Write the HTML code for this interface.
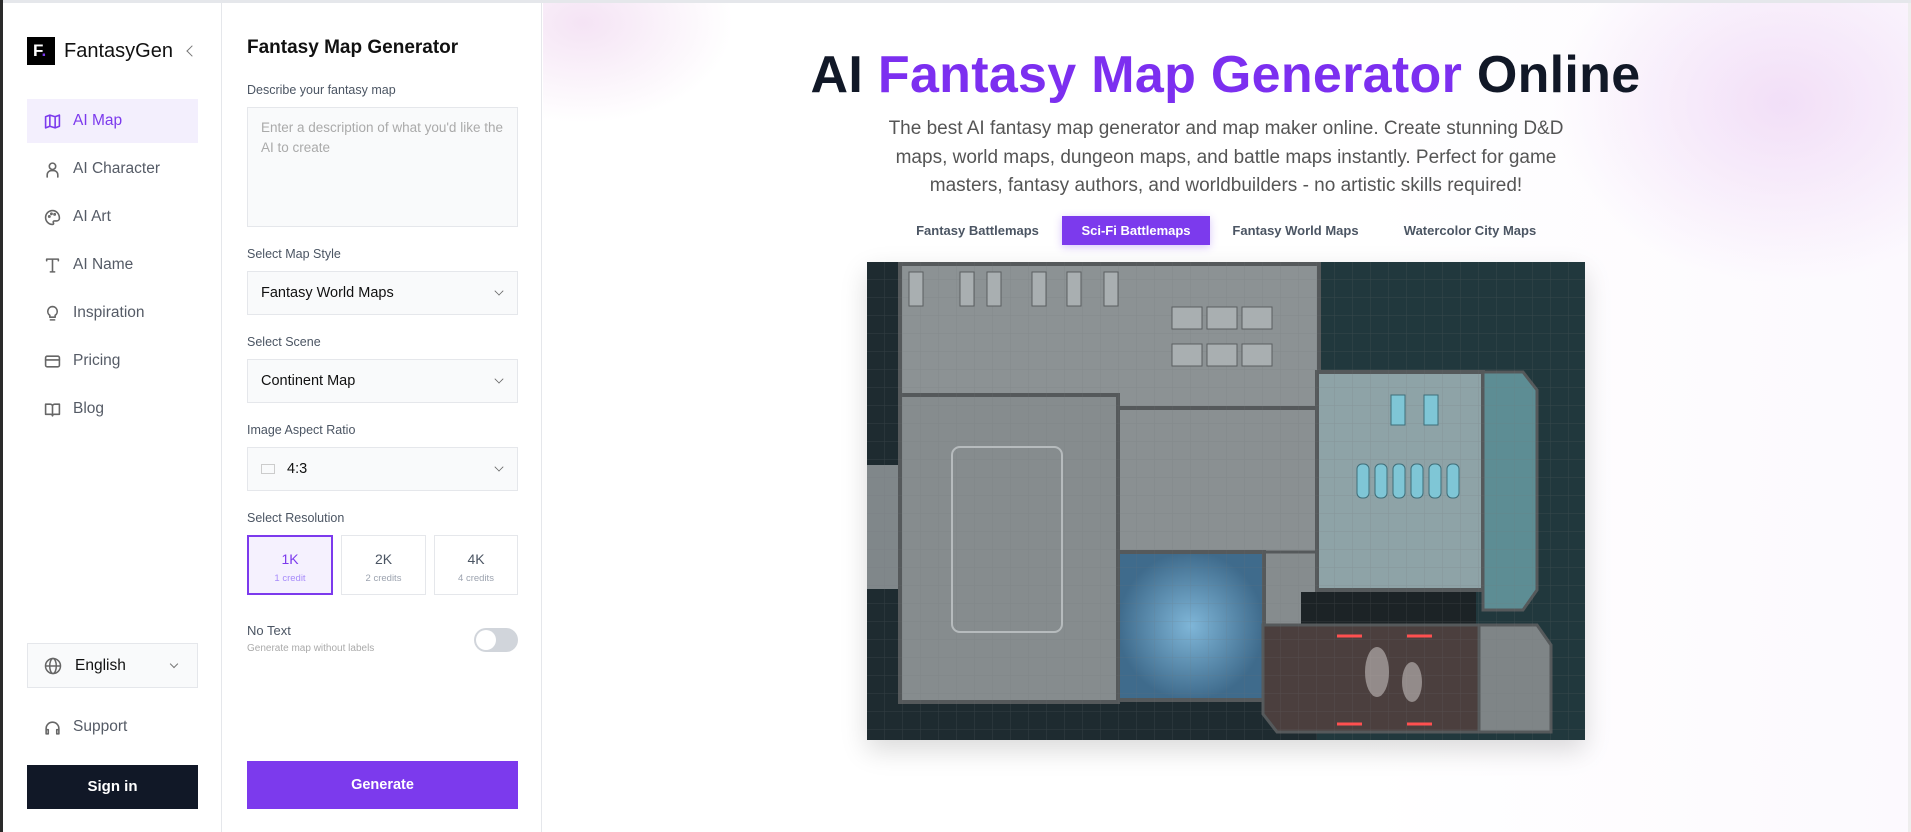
<!DOCTYPE html>
<html><head><meta charset="utf-8"><style>
*{box-sizing:border-box;margin:0;padding:0}
body{width:1911px;height:832px;overflow:hidden;background:#fff;font-family:"Liberation Sans",sans-serif;position:relative;color:#111827}
.abs{position:absolute}
#topline{left:0;top:0;width:1911px;height:3px;background:#e5e7eb;z-index:5}
#lstrip{left:0;top:0;width:3px;height:832px;background:#2a2a2a;z-index:6}
#side{left:3px;top:3px;width:219px;height:829px;border-right:1px solid #e5e7eb;background:#fff}
#panel{left:222px;top:3px;width:320px;height:829px;border-right:1px solid #e5e7eb;background:#fff}
#main{left:543px;top:3px;width:1365px;height:829px;overflow:hidden;
background:radial-gradient(ellipse 150px 100px at 40px 20px,rgba(236,205,236,.55),rgba(255,255,255,0)),
radial-gradient(ellipse 230px 180px at 1240px 100px,rgba(240,218,246,.85),rgba(255,255,255,0)),
linear-gradient(90deg,#fff 0%,#fff 60%,#fcf9fe 100%)}
#rline{left:1908px;top:3px;width:3px;height:829px;background:#eee}
.nav{position:absolute;left:27px;width:171px;height:44px;display:flex;align-items:center;padding-left:17px;font-size:15.5px;color:#555b66}
.nav svg{width:17px;height:17px;margin-right:12px;fill:none;stroke:#666;stroke-width:1.5;stroke-linecap:round;stroke-linejoin:round}
.lbl{position:absolute;left:247px;font-size:12.5px;color:#4b5563}
.sel{position:absolute;left:247px;width:271px;height:44px;border:1px solid #e5e7eb;background:#f9fafb;font-size:14.5px;color:#111;display:flex;align-items:center;padding-left:13px}
.sel .chev{position:absolute;right:14px;top:15px;width:8px;height:8px;border-right:1.3px solid #666;border-bottom:1.3px solid #666;transform:rotate(45deg) scale(.8)}
.res{position:absolute;top:535px;height:60px;border:1px solid #e5e7eb;text-align:center;font-size:14px;color:#4b5563;padding-top:15px}
.res small{display:block;font-size:9.5px;color:#9ca3af;margin-top:6px}
.tab{position:absolute;top:216px;height:29px;font-size:13px;font-weight:bold;color:#4b5563;line-height:29px;text-align:center}
</style></head><body>
<div id="topline" class="abs"></div><div id="lstrip" class="abs"></div>
<div id="side" class="abs"></div>
<div class="abs" style="left:27px;top:37px;width:28px;height:28px;background:#000;color:#fff;font-weight:bold;font-size:17px;line-height:28px;padding-left:6px">F<span style="color:#7c3aed">.</span></div>
<div class="abs" style="left:64px;top:38px;font-size:20px;color:#111;line-height:26px">FantasyGen</div>
<div class="abs" style="left:188px;top:47px;width:8px;height:8px;border-left:1.5px solid #777;border-bottom:1.5px solid #777;transform:rotate(45deg)"></div>
<div class="nav" style="top:99px;background:#f3effd;color:#7c3aed"><svg viewBox="0 0 16 16" style="stroke:#7c3aed"><path d="M1.5 3.5l4-1.5 5 1.5 4-1.5v10.5l-4 1.5-5-1.5-4 1.5z M5.5 2v10.5 M10.5 3.5v10.5"/></svg>AI Map</div>
<div class="nav" style="top:147px"><svg viewBox="0 0 16 16"><circle cx="8" cy="5" r="3"/><path d="M3 15v-2a4 4 0 0 1 4-4h2a4 4 0 0 1 4 4v2"/></svg>AI Character</div>
<div class="nav" style="top:195px"><svg viewBox="0 0 16 16"><path d="M8 1.5a6.5 6.5 0 1 0 0 13c1 0 1.3-.8.8-1.6-.5-.8 0-1.7 1-1.7H12a2.5 2.5 0 0 0 2.5-2.5C14.5 4.5 11.6 1.5 8 1.5z"/><circle cx="5" cy="7" r=".6"/><circle cx="7" cy="4.5" r=".6"/><circle cx="10" cy="5" r=".6"/></svg>AI Art</div>
<div class="nav" style="top:243px"><svg viewBox="0 0 16 16"><path d="M2.5 3.5v-1.5h11v1.5 M8 2v12 M6 14h4"/></svg>AI Name</div>
<div class="nav" style="top:291px"><svg viewBox="0 0 16 16"><path d="M8 1.5a4.5 4.5 0 0 0-2.5 8.2V11.5h5V9.7A4.5 4.5 0 0 0 8 1.5z M6 14h4"/></svg>Inspiration</div>
<div class="nav" style="top:339px"><svg viewBox="0 0 16 16"><rect x="1.5" y="3" width="13" height="10" rx="1.5"/><path d="M1.5 6.5h13"/></svg>Pricing</div>
<div class="nav" style="top:387px"><svg viewBox="0 0 16 16"><path d="M1.5 3h4.5a2 2 0 0 1 2 2v9a1.5 1.5 0 0 0-1.5-1.5H1.5z M14.5 3H10a2 2 0 0 0-2 2v9a1.5 1.5 0 0 1 1.5-1.5h5z"/></svg>Blog</div>
<div class="abs" style="left:27px;top:643px;width:171px;height:45px;border:1px solid #e5e7eb;background:#f9fafb;display:flex;align-items:center;padding-left:16px;font-size:15.5px;color:#111">
<svg viewBox="0 0 18 18" width="18" height="18" style="fill:none;stroke:#666;stroke-width:1.5;margin-right:13px"><circle cx="9" cy="9" r="7.5"/><ellipse cx="9" cy="9" rx="3.3" ry="7.5"/><path d="M1.5 9h15"/></svg>English
<div style="position:absolute;right:20px;top:17px;width:6px;height:6px;border-right:1.2px solid #777;border-bottom:1.2px solid #777;transform:rotate(45deg)"></div></div>
<div class="nav" style="top:705px"><svg viewBox="0 0 16 16"><path d="M2 13V9a6 6 0 0 1 12 0v4 M2 10h2v4H2z M12 10h2v4h-2z"/></svg>Support</div>
<div class="abs" style="left:27px;top:765px;width:171px;height:44px;background:#111827;color:#fff;font-size:15px;font-weight:bold;text-align:center;line-height:44px">Sign in</div>

<div id="panel" class="abs"></div>
<div class="abs" style="left:247px;top:37px;font-size:19px;font-weight:bold;color:#111">Fantasy Map Generator</div>
<div class="lbl" style="top:83px">Describe your fantasy map</div>
<div class="abs" style="left:247px;top:107px;width:271px;height:120px;border:1px solid #e5e7eb;background:#f9fafb;padding:10px 13px;font-size:13.5px;line-height:20px;color:#aaa">Enter a description of what you'd like the AI to create</div>
<div class="lbl" style="top:247px">Select Map Style</div>
<div class="sel" style="top:271px">Fantasy World Maps<div class="chev"></div></div>
<div class="lbl" style="top:335px">Select Scene</div>
<div class="sel" style="top:359px">Continent Map<div class="chev"></div></div>
<div class="lbl" style="top:423px">Image Aspect Ratio</div>
<div class="sel" style="top:447px"><span style="display:inline-block;width:14px;height:10px;border:1px solid #ccc;margin-right:12px"></span>4:3<div class="chev"></div></div>
<div class="lbl" style="top:511px">Select Resolution</div>
<div class="res" style="left:247px;width:86px;border:2px solid #7c3aed;background:#f5f1fe;color:#7c3aed;padding-top:14px">1K<small style="color:#a78bfa">1 credit</small></div>
<div class="res" style="left:341px;width:85px">2K<small>2 credits</small></div>
<div class="res" style="left:434px;width:84px">4K<small>4 credits</small></div>
<div class="abs" style="left:247px;top:623px;font-size:13px;color:#4b5563">No Text</div>
<div class="abs" style="left:247px;top:643px;font-size:10px;color:#aaa">Generate map without labels</div>
<div class="abs" style="left:474px;top:628px;width:44px;height:24px;border-radius:12px;background:#d1d5db"><div style="position:absolute;left:2px;top:2px;width:20px;height:20px;border-radius:50%;background:#fff"></div></div>
<div class="abs" style="left:247px;top:761px;width:271px;height:48px;background:#7c3aed;color:#fff;font-size:14.5px;font-weight:bold;text-align:center;line-height:48px">Generate</div>

<div id="main" class="abs"></div>
<div id="rline" class="abs"></div>
<div class="abs" style="left:543px;top:46px;width:1365px;text-align:center;font-size:52px;font-weight:bold;color:#111827;letter-spacing:.3px;line-height:58px">AI <span style="color:#7c2ff0">Fantasy Map Generator</span> Online</div>
<div class="abs" style="left:863px;top:115px;width:726px;text-align:center;font-size:19px;color:#555;line-height:28.5px">The best AI fantasy map generator and map maker online. Create stunning D&amp;D maps, world maps, dungeon maps, and battle maps instantly. Perfect for game masters, fantasy authors, and worldbuilders - no artistic skills required!</div>
<div class="tab" style="left:900px;width:155px">Fantasy Battlemaps</div>
<div class="tab" style="left:1062px;width:148px;background:#7c3aed;color:#fff;box-shadow:0 2px 8px rgba(124,58,237,.3)">Sci-Fi Battlemaps</div>
<div class="tab" style="left:1218px;width:155px">Fantasy World Maps</div>
<div class="tab" style="left:1390px;width:160px">Watercolor City Maps</div>

<svg class="abs" style="left:867px;top:262px;box-shadow:0 10px 25px rgba(0,0,0,.15)" width="718" height="478" viewBox="0 0 718 478">
<defs><pattern id="g" width="18" height="18" patternUnits="userSpaceOnUse"><path d="M18 0V18H0" fill="none" stroke="#6f7577" stroke-width="1" opacity=".6"/></pattern>
<radialGradient id="bl"><stop offset="0" stop-color="#7fb6d8"/><stop offset="1" stop-color="#3f6b8c"/></radialGradient></defs>
<rect width="718" height="478" fill="#1e2b30"/>
<rect x="450" y="0" width="268" height="478" fill="#21383d"/>
<rect x="0" y="203" width="36" height="124" fill="#80878a"/>
<rect x="33" y="2" width="419" height="146" fill="#8c9294" stroke="#55595b" stroke-width="4"/>
<rect x="33" y="133" width="218" height="307" fill="#868c8e" stroke="#55595b" stroke-width="4"/>
<rect x="251" y="146" width="200" height="146" fill="#8a9092" stroke="#55595b" stroke-width="4"/>
<rect x="396" y="290" width="56" height="80" fill="#868c8e" stroke="#55595b" stroke-width="3"/>
<rect x="251" y="290" width="146" height="148" fill="url(#bl)" stroke="#55595b" stroke-width="4"/>
<rect x="450" y="110" width="166" height="218" fill="#8ea3a7" stroke="#55595b" stroke-width="4"/>
<path d="M616 110h40l14 18v200l-14 20h-40z" fill="#5d8d94" stroke="#55595b" stroke-width="3"/>
<rect x="434" y="330" width="175" height="32" fill="#1c2326"/>
<path d="M396 363h216v107H410l-14-18z" fill="#4b3f3e" stroke="#55595b" stroke-width="3"/>
<path d="M612 363h58l14 20v87h-72z" fill="#7f8587" stroke="#55595b" stroke-width="3"/>
<rect x="0" y="0" width="718" height="478" fill="url(#g)" opacity=".45"/>
<g fill="#a9afb1" stroke="#5a5f61"><rect x="305" y="45" width="30" height="22"/><rect x="340" y="45" width="30" height="22"/><rect x="375" y="45" width="30" height="22"/><rect x="305" y="82" width="30" height="22"/><rect x="340" y="82" width="30" height="22"/><rect x="375" y="82" width="30" height="22"/>
<rect x="42" y="10" width="14" height="34"/><rect x="93" y="10" width="14" height="34"/><rect x="120" y="10" width="14" height="34"/><rect x="165" y="10" width="14" height="34"/><rect x="200" y="10" width="14" height="34"/><rect x="237" y="10" width="14" height="34"/></g>
<g fill="#7fc6d6" stroke="#3e6d78"><rect x="490" y="202" width="12" height="34" rx="5"/><rect x="508" y="202" width="12" height="34" rx="5"/><rect x="526" y="202" width="12" height="34" rx="5"/><rect x="544" y="202" width="12" height="34" rx="5"/><rect x="562" y="202" width="12" height="34" rx="5"/><rect x="580" y="202" width="12" height="34" rx="5"/><rect x="524" y="133" width="14" height="30"/><rect x="557" y="133" width="14" height="30"/></g>
<rect x="85" y="185" width="110" height="185" rx="8" fill="none" stroke="#b6bbbd" stroke-width="2"/>
<g stroke="#ff5050" stroke-width="3"><path d="M470 374h25M540 374h25M470 462h25M540 462h25"/></g>
<g fill="#d0cbc9" opacity=".55"><ellipse cx="510" cy="410" rx="12" ry="25"/><ellipse cx="545" cy="420" rx="10" ry="20"/></g>
</svg>
</body></html>
